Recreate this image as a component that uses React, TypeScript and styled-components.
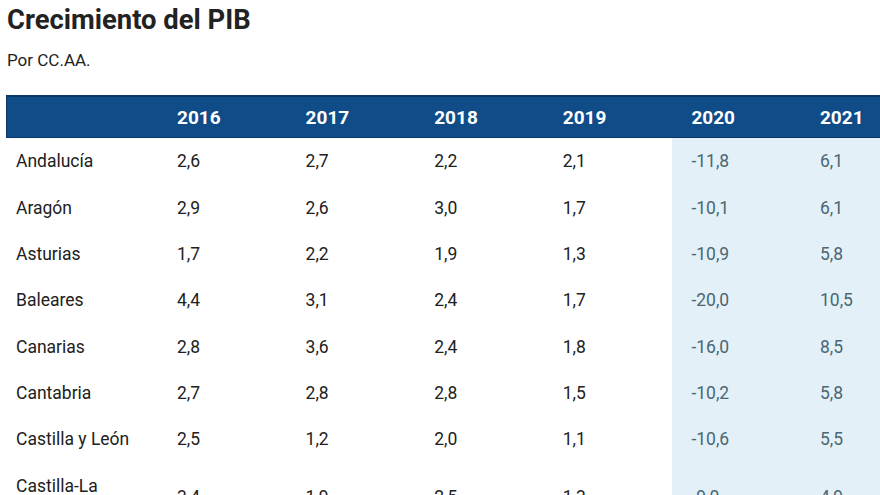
import React from "react";
import styled, { createGlobalStyle } from "styled-components";

const Global = createGlobalStyle`
  html, body { margin: 0; padding: 0; background: #ffffff; overflow: hidden; }
  body { font-family: Roboto, "Liberation Sans", Arial, sans-serif; color: #212121; }
`;

const Page = styled.div`
  width: 880px;
  height: 495px;
  overflow: hidden;
  padding: 0 0 0 6px;
  box-sizing: border-box;
`;

const Title = styled.h1`
  margin: 0;
  padding: 4px 0 0 1px;
  font-size: 27.4px;
  line-height: 32px;
  font-weight: 700;
  color: #222;
`;

const Subtitle = styled.p`
  margin: 0;
  padding: 14px 0 0 1px;
  font-size: 17px;
  line-height: 20px;
  color: #222;
`;

const Table = styled.div`
  margin-top: 25px;
  display: grid;
  grid-template-columns: 152px repeat(6, 128.6px);
  width: max-content;
`;

const HeadCell = styled.div<{ $first?: boolean }>`
  background: #0f4c88;
  border-top: 2px solid #0a3866;
  border-bottom: 1px solid #0a3866;
  ${(p) => (p.$first ? "border-left: 1px solid #0a3866;" : "")}
  height: 40px;
  display: flex;
  align-items: center;
  padding-left: 19px;
  font-size: 19px;
  font-weight: 700;
  color: #ffffff;
`;

const Cell = styled.div<{ $hl?: boolean; $label?: boolean }>`
  background: ${(p) => (p.$hl ? "#e3f0f8" : "transparent")};
  color: ${(p) => (p.$hl ? "#4a6772" : "#212121")};
  font-size: 17.5px;
  line-height: 22px;
  padding: 12.2px 0 12.2px ${(p) => (p.$label ? "10px" : "19px")};
  display: flex;
  align-items: center;
`;

const years = ["2016", "2017", "2018", "2019", "2020", "2021"];

const rows: [string, string[]][] = [
  ["Andalucía", ["2,6", "2,7", "2,2", "2,1", "-11,8", "6,1"]],
  ["Aragón", ["2,9", "2,6", "3,0", "1,7", "-10,1", "6,1"]],
  ["Asturias", ["1,7", "2,2", "1,9", "1,3", "-10,9", "5,8"]],
  ["Baleares", ["4,4", "3,1", "2,4", "1,7", "-20,0", "10,5"]],
  ["Canarias", ["2,8", "3,6", "2,4", "1,8", "-16,0", "8,5"]],
  ["Cantabria", ["2,7", "2,8", "2,8", "1,5", "-10,2", "5,8"]],
  ["Castilla y León", ["2,5", "1,2", "2,0", "1,1", "-10,6", "5,5"]],
  ["Castilla-La Mancha", ["3,4", "1,9", "2,5", "1,3", "-9,0", "4,9"]],
];

export default function App() {
  return (
    <Page>
      <Global />
      <Title>Crecimiento del PIB</Title>
      <Subtitle>Por CC.AA.</Subtitle>
      <Table>
        <HeadCell $first />
        {years.map((y) => (
          <HeadCell key={y}>{y}</HeadCell>
        ))}
        {rows.map(([name, vals]) => (
          <React.Fragment key={name}>
            <Cell $label>{name}</Cell>
            {vals.map((v, i) => (
              <Cell key={i} $hl={i >= 4}>
                {v}
              </Cell>
            ))}
          </React.Fragment>
        ))}
      </Table>
    </Page>
  );
}
